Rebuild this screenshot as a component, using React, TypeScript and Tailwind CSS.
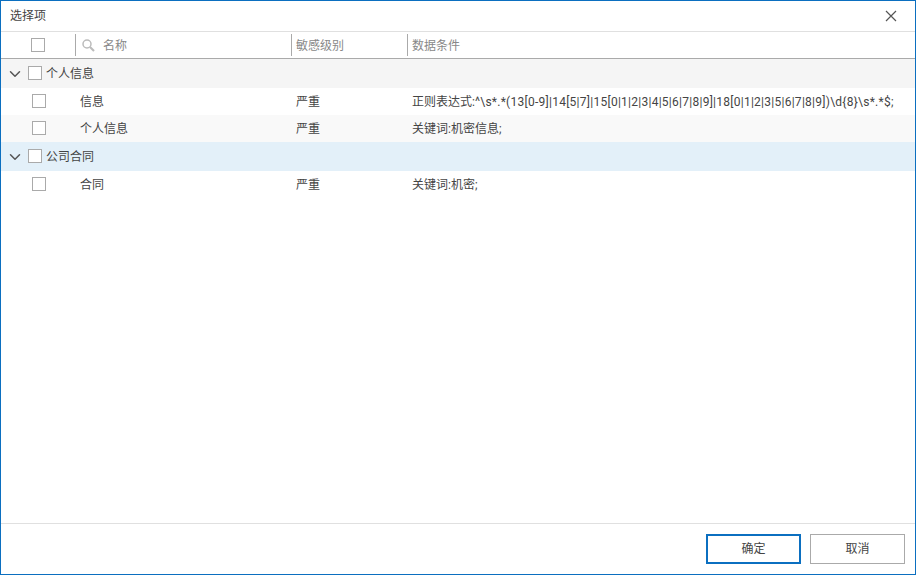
import type { ReactNode } from "react";
import { ChevronDown } from "lucide-react";

const font = "font-['Roboto','Noto_Sans_CJK_SC',sans-serif]";

const Check = ({ className = "" }: { className?: string }) => (
    <span className={`mb-[1px] block h-[14px] w-[14px] border border-[#aaaaaa] bg-white ${className}`} />
);

const Group = ({ name, active }: { name: string; active?: boolean }) => (
    <div className={`flex h-[29px] items-center ${active ? "bg-[#e3f0f9]" : "bg-[#f5f5f5]"}`}>
        <ChevronDown size={18} strokeWidth={2} className="ml-[5px] text-[#555555]" />
        <Check className="ml-[4px]" />
        <span className="ml-[4px] text-[#444444]">{name}</span>
    </div>
);

const Row = ({ name, level, cond, striped }: { name: string; level: string; cond: ReactNode; striped?: boolean }) => (
    <div className={`flex h-[27px] items-center ${striped ? "bg-[#f9f9f9]" : "bg-white"}`}>
        <div className="w-[79px] shrink-0 pl-[31px]">
            <Check />
        </div>
        <div className="w-[216px] shrink-0 text-[#444444]">{name}</div>
        <div className="w-[116px] shrink-0 text-[#444444]">{level}</div>
        <div className="whitespace-nowrap text-[#444444]">{cond}</div>
    </div>
);

export default function App() {
    return (
        <div className={`flex h-[575px] w-[916px] flex-col overflow-hidden border border-[#0b6fc0] bg-white text-[12px] ${font}`}>
            {/* title */}
            <div className="flex h-[31px] shrink-0 items-center justify-between border-b border-[#e0e0e0] pl-[9px] pr-[18px]">
                <span className="text-[#444444]">选择项</span>
                <svg width="12" height="12" viewBox="0 0 12 12" className="text-[#555555]">
                    <path d="M1 1 L11 11 M11 1 L1 11" stroke="currentColor" strokeWidth="1.2" fill="none" />
                </svg>
            </div>

            {/* table head */}
            <div className="flex h-[27px] shrink-0 items-center border-b border-[#aaaaaa] text-[#888888]">
                <div className="w-[74px] shrink-0 pl-[30px]">
                    <Check className="mb-0" />
                </div>
                <div className="flex h-[22px] w-[216px] shrink-0 items-center border-l border-[#aaaaaa] pl-[6px]">
                    <svg width="13" height="13" viewBox="0 0 13 13" className="text-[#bbbbbb]">
                        <circle cx="5" cy="5" r="4" stroke="currentColor" strokeWidth="1.5" fill="none" />
                        <path d="M8 8 L12 12" stroke="currentColor" strokeWidth="2.2" fill="none" />
                    </svg>
                    <span className="ml-[8px] pt-[1px]">名称</span>
                </div>
                <div className="flex h-[22px] w-[116px] shrink-0 items-center border-l border-[#aaaaaa] pl-[4px] pt-[1px]">敏感级别</div>
                <div className="flex h-[22px] items-center border-l border-[#aaaaaa] pl-[4px] pt-[1px]">数据条件</div>
            </div>

            <div className="flex-1">
                <Group name="个人信息" />
                <Row
                    name="信息"
                    level="严重"
                    cond={
                        <>
                            正则表达式:
                            <span className="tracking-[0.26px]">{"^\\s*.*(13[0-9]|14[5|7]|15[0|1|2|3|4|5|6|7|8|9]|18[0|1|2|3|5|6|7|8|9])\\d{8}\\s*.*$;"}</span>
                        </>
                    }
                />
                <Row name="个人信息" level="严重" cond="关键词:机密信息;" striped />
                <Group name="公司合同" active />
                <Row name="合同" level="严重" cond="关键词:机密;" />
            </div>

            {/* footer */}
            <div className="flex h-[51px] shrink-0 items-start justify-end gap-[9px] border-t border-[#e0e0e0] pr-[10px] pt-[10px]">
                <button className="h-[30px] w-[95px] border-2 border-[#0b6fc0] bg-white text-[#444444]">确定</button>
                <button className="h-[30px] w-[95px] border border-[#aaaaaa] bg-white text-[#444444]">取消</button>
            </div>
        </div>
    );
}
